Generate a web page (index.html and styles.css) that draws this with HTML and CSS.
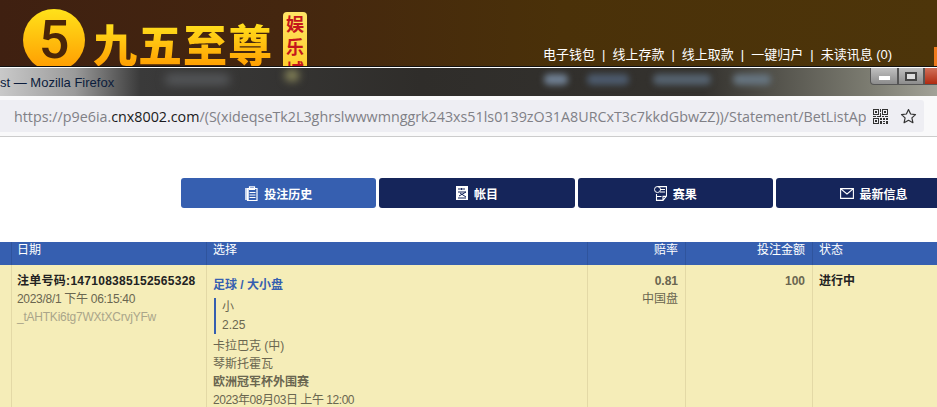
FILE: index.html
```html
<!DOCTYPE html>
<html>
<head>
	<meta charset="utf-8">
	<title>投注历史</title>
	<link rel="stylesheet" href="styles.css">
</head>
<body>

<!-- 站点头部 -->
<div class="top">
	<div class="logo">
		<div class="logo-five">5</div>
		<div class="logo-name">九五至尊</div>
		<div class="logo-tag">娱<br>乐<br>城</div>
	</div>
	<div class="top-links">
		<span>电子钱包</span><i>|</i><span>线上存款</span><i>|</i><span>线上取款</span><i>|</i><span>一键归户</span><i>|</i><span>未读讯息 (0)</span>
	</div>
	<div class="top-corner"></div>
</div>

<!-- 浏览器窗口 -->
<div class="titlebar">
	<span class="win-title">st — Mozilla Firefox</span>
	<div class="blur-tabs">
		<b class="b0"></b><b class="b5"></b><b class="b1"></b><b class="b2"></b><b class="b3"></b><b class="b4"></b>
	</div>
	<div class="win-btns">
		<span class="win-btn"><em class="min"></em></span>
		<span class="win-btn"><em class="max"></em></span>
		<span class="win-btn close"></span>
	</div>
</div>
<div class="urlbar">
	<div class="urlbox">
		<div class="url"><span>https://p9e6ia.</span><strong>cnx8002.com</strong><span>/(S(xideqseTk2L3ghrslwwwmnggrk243xs51ls0139zO31A8URCxT3c7kkdGbwZZ))/Statement/BetListApp</span></div>
		<svg class="qr" width="15" height="15" viewBox="0 0 15 15">
			<path fill="#333" d="M0 0h6v6H0zM9 0h6v6H9zM0 9h6v6H0z"/>
			<path fill="#eeeef3" d="M1 1h4v4H1zM10 1h4v4h-4zM1 10h4v4H1z"/>
			<path fill="#333" d="M2 2h2v2H2zM11 2h2v2h-2zM2 11h2v2H2zM7 0h1v3H7zM7 4h1v3H7zM0 7h3v1H0zM4 7h4v1H4zM9 7h2v1H9zM12 7h3v1h-3zM7 9h2v2H7zM10 9h2v2h-2zM13 9h2v2h-2zM7 12h2v3H7zM10 12h2v1h-2zM13 12h2v3h-2zM10 14h2v1h-2z"/>
		</svg>
		<svg class="star" width="17" height="17" viewBox="0 0 17 17">
			<path fill="none" stroke="#333" stroke-width="1.2" stroke-linejoin="round" d="M8.5 1.5l2.1 4.5 4.9.6-3.6 3.3 1 4.8-4.4-2.4-4.4 2.4 1-4.8-3.6-3.3 4.9-.6z"/>
		</svg>
	</div>
</div>

<!-- 页面 -->
<div class="page">
	<div class="tabs">
		<a class="tab active">
			<svg width="13" height="15" viewBox="0 0 13 15"><path fill="#c9d5ec" d="M0 2h4v12H0z"/><path fill="none" stroke="#fff" stroke-width="1.2" d="M2.5 2.5h9.5v12H2.500zM4.500 .8h5v2.500h-5z"/><path stroke="#fff" d="M4.500 6.500h6M4.500 9h6M4.500 11.500h6"/></svg>
			投注历史
		</a>
		<a class="tab">
			<svg width="12" height="14" viewBox="0 0 12 14"><path fill="#fff" d="M0 0h12v14H0z"/><path fill="none" stroke="#15255a" d="M2 3h7M5.500 2v2M2 6h8L3 10M4 7l6 4M2 12h8"/></svg>
			帐目
		</a>
		<a class="tab">
			<svg width="13" height="15" viewBox="0 0 13 15"><circle cx="3.500" cy="3.500" r="3" fill="none" stroke="#fff"/><path fill="none" stroke="#fff" stroke-width="1.1" d="M3.500 .6h9v9.400l-3.500 4.400H2.500V8M6 3.500h5M6 6h5M2.500 10.500h5M9 14.400v-4h3.500"/></svg>
			赛果
		</a>
		<a class="tab">
			<svg width="14" height="11" viewBox="0 0 14 11"><path fill="none" stroke="#fff" stroke-width="1.1" d="M.6.6h12.800v9.800H.6zM.8.8L7 6l6.200-5.200"/></svg>
			最新信息
		</a>
	</div>

	<div class="bets">
		<div class="row head">
			<div class="c-no"></div>
			<div class="c-date">日期</div>
			<div class="c-sel">选择</div>
			<div class="c-odds">赔率</div>
			<div class="c-amt">投注金额</div>
			<div class="c-state">状态</div>
		</div>
		<div class="row body">
			<div class="c-no"></div>
			<div class="c-date">
				<p class="bet-id">注单号码:147108385152565328</p>
				<p class="bet-time">2023/8/1 下午 06:15:40</p>
				<p class="bet-ref">_tAHTKi6tg7WXtXCrvjYFw</p>
			</div>
			<div class="c-sel">
				<p class="sport">足球 / 大小盘</p>
				<div class="pick">
					<p>小</p>
					<p>2.25</p>
				</div>
				<p>卡拉巴克 (中)</p>
				<p>琴斯托霍瓦</p>
				<p class="league">欧洲冠军杯外围赛</p>
				<p class="match-time">2023年08月03日 上午 12:00</p>
			</div>
			<div class="c-odds">
				<p class="num">0.81</p>
				<p>中国盘</p>
			</div>
			<div class="c-amt"><p class="num">100</p></div>
			<div class="c-state"><p class="state">进行中</p></div>
		</div>
	</div>
</div>

</body>
</html>
```

FILE: styles.css
```css
html,body{
	height:100%;
}
body{
	margin:0; background:#fff; overflow:hidden;
	font-family:"Liberation Sans","Noto Sans CJK SC",sans-serif; font-size:12px; color:#6a6650;
}
p{
	margin:0;
}

/*头部*/
.top{
	height:66px; display:flex; overflow:hidden;
	background:linear-gradient(90deg,#3f2011 0,#44260f 30%,#4a3109 60%,#4d350a 100%);
	border-bottom:1px solid #111;
}
.logo{
	width:543px; padding:9px 0 0 23px; box-sizing:border-box;
	display:flex; align-items:flex-start;
}
.logo-five{
	width:62px; height:62px; flex:none; border-radius:50%;
	background:linear-gradient(#ffe21a,#ff9a00);
	font-family:Roboto,sans-serif; font-size:54px; font-weight:500; line-height:62px; text-align:center; color:#4a2508;
}
.logo-name{
	margin:9px 0 0 8px;
	font-family:"Noto Sans CJK SC",sans-serif; font-size:44px; font-weight:900; line-height:50px; letter-spacing:1px; white-space:nowrap;
	background:linear-gradient(#ffe820,#ff9c00); -webkit-background-clip:text; background-clip:text; color:transparent;
}
.logo-tag{
	width:24px; height:70px; margin:3px 0 0 10px; flex:none; border-radius:4px;
	background:linear-gradient(#ffe566,#ffc81e);
	font-family:"Noto Sans CJK SC",sans-serif; font-size:18px; font-weight:bold; line-height:23px; text-align:center; color:#c4161c;
}
.top-links{
	padding-top:46px; flex:1;
	font-size:13px; line-height:18px; color:#fff; white-space:nowrap;
}
.top-links i{
	margin:0 7px; font-style:normal;
}
.top-corner{
	width:3px; height:19px; margin-top:47px; background:#f07a1c;
}

/*窗口标题*/
.titlebar{
	height:28px; display:flex; align-items:center; position:relative;
	border-top:1px solid #fff;
	background:linear-gradient(90deg,#c9c9c9 0,#9a9a9a 8%,#3a3a3a 15%,#2f2d2a 45%,#34322e 75%,#7d7d72 93%,#a2a298 100%);
	overflow:hidden;
}
.win-title{
	font-size:13px; color:#0b1c3c; white-space:nowrap; position:relative; z-index:1;
}
.blur-tabs b{
	position:absolute; top:6px; height:11px; background:#6f7f92; border-radius:5px; filter:blur(3px);
}
.blur-tabs .b0{ left:165px; width:65px; background:#55575a; filter:blur(5px); }
.blur-tabs .b5{ left:285px; width:14px; top:2px; background:#8c8a5c; filter:blur(4px); }
.blur-tabs .b1{ left:544px; width:24px; }
.blur-tabs .b2{ left:587px; width:42px; background:#4c5a6c; }
.blur-tabs .b3{ left:653px; width:58px; background:#55626f; }
.blur-tabs .b4{ left:733px; width:38px; background:#66747f; }
.win-btns{
	position:absolute; right:0; top:0; display:flex;
}
.win-btn{
	width:28px; height:17px; display:flex; align-items:center; justify-content:center;
	border:1px solid #555; border-top:0; box-sizing:border-box;
	background:linear-gradient(#c0c0c0,#8c8c8c);
}
.win-btn:first-child{
	width:28px; border-bottom-left-radius:4px;
}
.win-btn:nth-child(2){
	width:26px;
}
.win-btn.close{
	width:13px; border-right:0;
	background:linear-gradient(#d0705a,#b02a10);
}
.win-btn em{
	display:block; background:#fff;
}
.win-btn .min{ width:11px; height:4px; margin-top:4px; }
.win-btn .max{ width:12px; height:9px; border:2px solid #444; background:#ddd; box-sizing:border-box; }

/*地址栏*/
.urlbar{
	height:41px; padding:4px 13px 4px 0; box-sizing:border-box;
	background:#f9f9fa; border-bottom:1px solid #ccc;
}
.urlbox{
	height:32px; padding-left:14px; display:flex; align-items:center;
	background:#eeeef3; border-radius:0 3px 3px 0;
}
.url{
	width:852px; margin-right:5px; flex:none; overflow:hidden; white-space:nowrap;
	font-family:"Open Sans","Liberation Sans",sans-serif; font-size:14.3px; color:#808086;
}
.url strong{
	font-weight:normal; color:#1a1a20;
}
.qr{
	margin-left:2px; flex:none;
}
.star{
	margin-left:12px; flex:none;
}

/*页面*/
.page{
	height:270px; overflow:hidden;
}
.tabs{
	padding:41px 0 34px 181px; display:flex; gap:3px;
}
.tab{
	width:195.3px; height:30px; flex:none; border-radius:3px;
	display:flex; align-items:center; justify-content:center; gap:6px;
	background:#15255a;
	font-size:12px; font-weight:bold; color:#fff;
}
.tab.active{
	background:#365fb0;
}

/*注单表格*/
.row{
	display:flex;
}
.row>div{
	box-sizing:border-box; border-right:1px solid #e3d9a6;
}
.head{
	height:23px; background:#365fb0;
	line-height:16px; color:#fff;
}
.head>div{
	border-right-color:#2f549d;
}
.body{
	height:200px; background:#f5edb8;
	line-height:18px;
}
.c-no{ width:12px; }
.c-date{ width:195px; padding:0 5px; }
.c-sel{ width:381px; padding:0 5px 0 6px; }
.c-odds{ width:98px; padding:0 7px; text-align:right; }
.c-amt{ width:127px; padding:0 7px; text-align:right; }
.c-state{ flex:1; padding:0 6px; border-right:0 !important; }
.body .c-date{ padding-top:7px; }
.body .c-sel{ padding-top:11px; }
.body .c-odds,.body .c-amt,.body .c-state{ padding-top:7px; }
.bet-id{
	letter-spacing:.28px;
}
.bet-id,.state{
	font-weight:bold; color:#222;
}
.bet-time{
	letter-spacing:-.3px;
}
.bet-ref{
	color:#aaa58a; letter-spacing:-.23px;
}
.match-time{
	letter-spacing:-.45px;
}
.sport{
	font-weight:bold; color:#365fb0;
}
.pick{
	margin:4px 0 3px 1px; padding-left:6px; border-left:2px solid #365fb0;
}
.league,.num{
	font-weight:bold;
}
```
